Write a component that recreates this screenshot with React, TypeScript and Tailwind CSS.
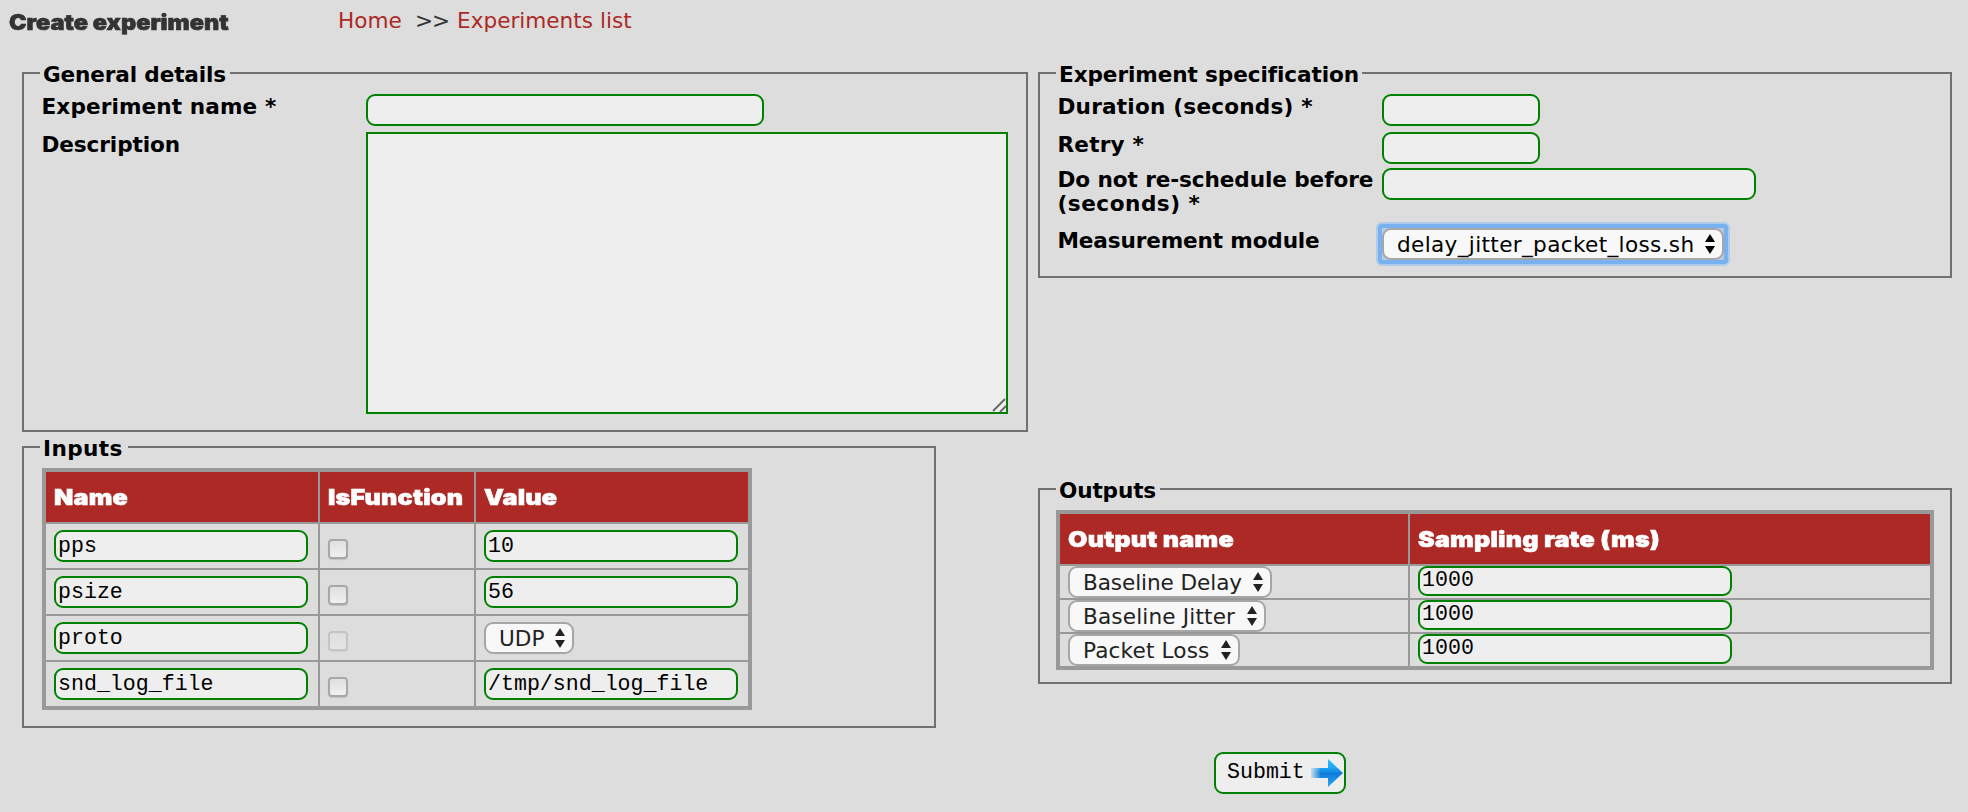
import React from "react";

const sans = "font-['DejaVu_Sans',sans-serif]";
const mono = "font-['Liberation_Mono',monospace]";
const heavy = "font-['Inter','Liberation_Sans',sans-serif] font-black [-webkit-text-stroke:0.6px_currentColor]";

function Panel({ title, legend, className, children }: { title: string; legend: string; className: string; children: React.ReactNode }) {
  return (
    <fieldset className={`box-border border-2 border-[#707070] px-4 ${className}`}>
      <legend className={`h-[26px] pl-[3px] text-[21.6px] leading-[29px] font-bold whitespace-nowrap text-black ${legend}`}>{title}</legend>
      {children}
    </fieldset>
  );
}

function Field({ className, value = "" }: { className: string; value?: string }) {
  return (
    <input
      defaultValue={value}
      className={`block rounded-[9px] border-2 border-[#008000] bg-[#eeeeee] px-[2px] text-[21.6px] text-black outline-none ${mono} ${className}`}
    />
  );
}

function Arrows() {
  return (
    <svg viewBox="0 0 10 20" className="h-5 w-[10px] shrink-0" fill="currentColor">
      <path d="M5 0 10 8H0zM5 20 0 12h10z" />
    </svg>
  );
}

function Choice({ label, className }: { label: string; className: string }) {
  return (
    <div className={`flex h-8 items-center justify-between rounded-[9px] border-2 border-[#a6a6a6] bg-[#f8f8f8] pr-[7px] pl-[13px] text-[21.6px] leading-7 whitespace-nowrap ${className}`}>
      <span className="pt-px">{label}</span>
      <Arrows />
    </div>
  );
}

function Check({ faded }: { faded?: boolean }) {
  return (
    <div
      className={`mt-[15px] ml-2 size-5 rounded-[4px] border-2 border-[#a8a8a8] bg-linear-to-b from-[#e0e0e0] to-[#f0f0f0] shadow-[0_1px_1px_rgba(0,0,0,0.12)] ${faded ? "opacity-45" : ""}`}
    />
  );
}

function Head({ children }: { children: React.ReactNode }) {
  return (
    <div className={`flex h-[50px] items-center bg-[#ac2925] pt-px pl-2 text-[22px] whitespace-nowrap text-white ${heavy}`}>
      <span className="origin-left scale-x-[1.14] tracking-[0.2px]">{children}</span>
    </div>
  );
}

const inputs = [
  { name: "pps", value: "10" },
  { name: "psize", value: "56" },
  { name: "proto", value: "UDP" },
  { name: "snd_log_file", value: "/tmp/snd_log_file" },
];

const outputs = [
  { label: "Baseline Delay", style: "w-[204px] tracking-[-0.1px]" },
  { label: "Baseline Jitter", style: "w-[198px] tracking-[0.15px]" },
  { label: "Packet Loss", style: "w-[172px] tracking-[0.15px]" },
];

export default function App() {
  return (
    <div className={`h-[812px] w-[1968px] overflow-hidden bg-[#dddddd] text-[#222222] ${sans}`}>
      <header className="flex h-[60px] text-[#333333]">
        <h1 className={`w-[338px] pt-[8px] pl-[9px] text-[21.6px] leading-[28px] whitespace-nowrap ${heavy}`}>
          <span className="inline-block origin-left scale-x-[1.09]">Create experiment</span>
        </h1>
        <nav className="flex pt-[7px] text-[21.6px] leading-[28px] whitespace-nowrap">
          <a className="w-[77px] text-[#ac2925]">Home</a>
          <span className="w-[42px] tracking-[-1.2px]">&gt;&gt;</span>
          <a className="text-[#ac2925]">Experiments list</a>
        </nav>
      </header>

      <main className="flex">
        <section className="w-[1016px] pl-[22px]">
          <Panel title="General details" legend="w-[190px] tracking-[-0.15px]" className="mr-[-12px] h-[372px] w-[1006px]">
            <div className="flex pt-2 pl-[1.5px] text-[21.6px] font-bold text-black">
              <div className="w-[324.5px] leading-[38px] whitespace-nowrap">
                <div className="-mt-[6px] tracking-[0.1px]">Experiment name *</div>
                <div className="tracking-[-0.1px]">Description</div>
              </div>
              <div>
                <Field className="mb-[6px] h-8 w-[398px]" />
                <div className="relative h-[282px] w-[642px]">
                  <textarea className={`block size-full resize-none border-2 border-[#008000] bg-[#eeeeee] p-1 font-normal outline-none ${mono}`} />
                  <svg viewBox="0 0 16 16" className="absolute right-px bottom-px size-4" stroke="#666" strokeWidth="1.8">
                    <path d="M2 14 14 2M9 15l6-6" />
                  </svg>
                </div>
              </div>
            </div>
          </Panel>

          <Panel title="Inputs" legend="w-[88px] tracking-[0.4px]" className="mt-[2px] h-[294px] w-[914px]">
            <div className="mt-[8px] ml-[2px] grid w-[710px] grid-cols-[272px_154px_272px] gap-[2px] border-4 border-[#999999] bg-[#999999]">
              <Head>Name</Head>
              <Head>IsFunction</Head>
              <Head>Value</Head>
              {inputs.map((row) => (
                <React.Fragment key={row.name}>
                  <div className="h-11 bg-[#dddddd] pt-[6px] pl-2">
                    <Field value={row.name} className="h-8 w-[254px]" />
                  </div>
                  <div className="h-11 bg-[#dddddd]">
                    <Check faded={row.name === "proto"} />
                  </div>
                  <div className="h-11 bg-[#dddddd] pt-[6px] pl-2">
                    {row.name === "proto" ? <Choice label="UDP" className="w-[90px]" /> : <Field value={row.value} className="h-8 w-[254px]" />}
                  </div>
                </React.Fragment>
              ))}
            </div>
          </Panel>
        </section>

        <section className="w-[936px] pl-[22px]">
          <Panel title="Experiment specification" legend="w-[306px] tracking-[-0.1px]" className="h-[218px] w-[914px]">
            <div className="grid grid-cols-[324.5px_1fr] grid-rows-[38px_36px_60px_44px] pt-2 pl-[1.5px] text-[21.6px] leading-[25px] font-bold whitespace-nowrap text-black">
              <div className="tracking-[0.2px]">Duration (seconds) *</div>
              <Field className="h-8 w-[158px]" />
              <div className="tracking-[0.2px]">Retry *</div>
              <Field className="h-8 w-[158px]" />
              <div className="leading-6">
                <div className="tracking-[-0.1px]">Do not re-schedule before</div>
                <div className="tracking-[0.5px]">(seconds) *</div>
              </div>
              <Field className="h-8 w-[374px]" />
              <div className="tracking-[-0.15px]">Measurement module</div>
              <div className="-mt-[6px] -ml-[6px] h-11 w-[354px] rounded-[6px] border-2 border-[#b0cbe9] bg-[#78b1f0] p-1 font-normal">
                <div className="bg-[#b9cbdf]">
                  <Choice label="delay_jitter_packet_loss.sh" className="tracking-[0.34px]" />
                </div>
              </div>
            </div>
          </Panel>

          <Panel title="Outputs" legend="w-[104px] tracking-[-0.15px]" className="mt-[198px] h-[208px] w-[914px]">
            <div className="mt-[8px] grid w-[878px] grid-cols-[348px_520px] gap-[2px] border-4 border-[#999999] bg-[#999999]">
              <Head>Output name</Head>
              <Head>Sampling rate (ms)</Head>
              {outputs.map((row) => (
                <React.Fragment key={row.label}>
                  <div className="h-8 bg-[#dddddd] pl-2">
                    <Choice label={row.label} className={row.style} />
                  </div>
                  <div className="h-8 bg-[#dddddd] pl-2">
                    <Field value="1000" className="h-[30px] w-[314px] pb-[2px]" />
                  </div>
                </React.Fragment>
              ))}
            </div>
          </Panel>

          <button className={`mt-[68px] ml-[176px] flex h-[42px] w-[132px] items-center rounded-[9px] border-2 border-[#008000] bg-[#eeeeee] pl-[11px] text-[21.6px] text-black ${mono}`}>
            <span className="-mt-px">Submit</span>
            <svg viewBox="0 0 32 30" className="ml-[6px] h-[30px] w-8 shrink-0">
              <defs>
                <linearGradient id="body" x1="0" y1="0" x2="0" y2="1">
                  <stop offset="0" stopColor="#2cc0ff" />
                  <stop offset="0.3" stopColor="#1fa9f6" />
                  <stop offset="0.52" stopColor="#117cd8" />
                  <stop offset="1" stopColor="#2fa8f5" />
                </linearGradient>
                <linearGradient id="fade" x1="0" y1="0" x2="1" y2="0">
                  <stop offset="0" stopColor="#fff" stopOpacity="0.15" />
                  <stop offset="0.3" stopColor="#fff" />
                </linearGradient>
                <mask id="tail">
                  <rect width="32" height="30" fill="url(#fade)" />
                </mask>
              </defs>
              <path d="M0 10h17V1l15 14-15 14v-9H0z" fill="url(#body)" mask="url(#tail)" />
            </svg>
          </button>
        </section>
      </main>
    </div>
  );
}
